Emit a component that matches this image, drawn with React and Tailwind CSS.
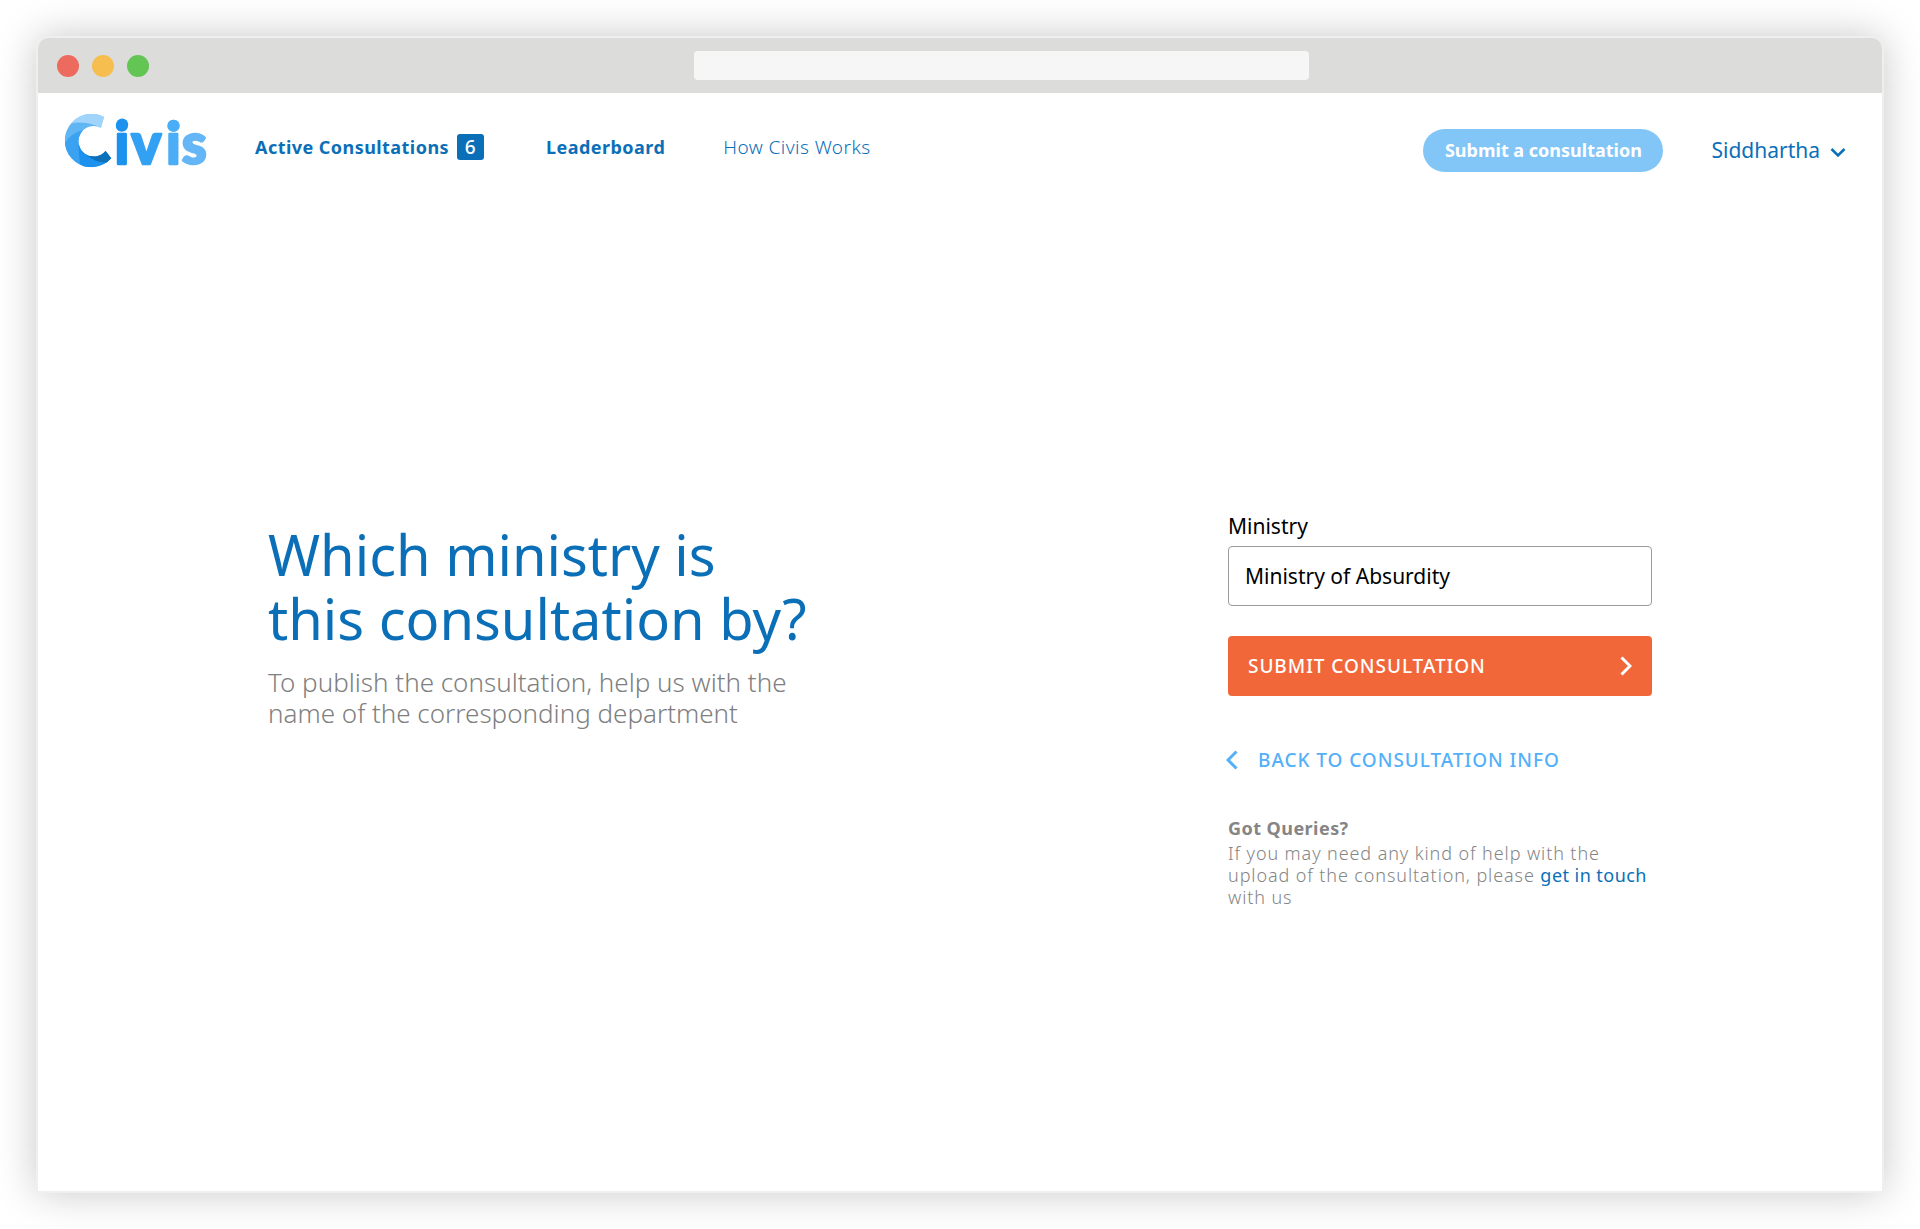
import React, { useState } from 'react';

const Logo = () => (
  <svg viewBox="133 280 430 165" className="h-[55px] w-[143px] overflow-visible" role="img" aria-label="Civis">
    <defs>
      <clipPath id="mark">
        <path d="M253 289 A80 80 0 1 0 275 413 L258 391 A46 46 0 1 1 244 321 Z" />
      </clipPath>
    </defs>
    <g clipPath="url(#mark)">
      <rect x="130" y="275" width="150" height="170" fill="#60b5f3" />
      <path d="M150 309 Q195 298 246 322 L262 275 L140 275 Z" fill="#a1d4fb" />
      <path d="M130 378 Q145 340 190 328 L200 445 L130 445 Z" fill="#3ba2f1" />
      <path d="M176 372 Q178 410 183 445 L290 445 L280 380 Z" fill="#1c92ee" />
      <path d="M200 403 Q236 412 258 389 L278 412 L268 426 Q230 428 200 403 Z" fill="#0d70b8" />
    </g>
    <g fontFamily="Lato, sans-serif" fontWeight="900" fontSize="170" strokeWidth="7" strokeLinejoin="round">
      <text x="285" y="431" fill="#1c92ee" stroke="#1c92ee">i</text>
      <text x="335" y="431" fill="#33a1f3" stroke="#33a1f3">v</text>
      <text x="440" y="431" fill="#4badf5" stroke="#4badf5">i</text>
      <text x="487" y="431" fill="#64b6f6" stroke="#64b6f6">s</text>
    </g>
    <circle cx="308" cy="311" r="18" fill="#1c92ee" />
    <circle cx="463" cy="315" r="18" fill="#4badf5" />
  </svg>
);

const TitleBar = () => (
  <div className="relative flex h-[55px] items-center bg-[#dcdcda] px-[19px]">
    <div className="flex gap-[13px]">
      <span className="size-[22px] rounded-full bg-[#ed6a5e]" />
      <span className="size-[22px] rounded-full bg-[#f6be4f]" />
      <span className="size-[22px] rounded-full bg-[#62c554]" />
    </div>
    <input
      aria-label="Address"
      className="absolute left-[35.6%] h-[29px] w-1/3 rounded bg-[#f6f6f6] px-3"
    />
  </div>
);

const Header = () => (
  <header className="flex items-start justify-between pr-9 pl-[26px] pt-[21px] text-[#0b6fb8]">
    <div className="flex items-start">
      <a href="#home">
        <Logo />
      </a>
      <nav className="ml-12 flex items-center pt-[18px] text-[18px] leading-[30px] tracking-wide">
        <a href="#consultations" className="flex items-center gap-2 font-bold">
          Active Consultations
          <span className="flex h-[26px] w-[27px] items-center justify-center rounded-[3px] bg-[#0b6fb8] text-[19px] font-medium text-white">
            6
          </span>
        </a>
        <a href="#leaderboard" className="ml-[62px] font-bold">Leaderboard</a>
        <a href="#how" className="ml-[58px] text-[19px] font-light">How Civis Works</a>
      </nav>
    </div>
    <div className="flex items-center gap-12 pt-[15px]">
      <button type="button" className="h-[43px] w-60 rounded-full bg-[#82c6f8] text-[18px] font-bold text-white">
        Submit a consultation
      </button>
      <button type="button" className="flex items-center gap-[10px] text-[21px]">
        Siddhartha
        <svg viewBox="0 0 16 11" className="mt-1 h-[11px] w-4" fill="none" stroke="currentColor" strokeWidth="2.5">
          <path d="M1.5 2 L8 8.5 L14.5 2" />
        </svg>
      </button>
    </div>
  </header>
);

const MinistryForm = () => {
  const [ministry, setMinistry] = useState('Ministry of Absurdity');

  return (
    <form className="w-[424px]" onSubmit={(e) => e.preventDefault()}>
      <label htmlFor="ministry" className="block text-[21px] leading-[30px] text-black">Ministry</label>
      <input
        id="ministry"
        value={ministry}
        onChange={(e) => setMinistry(e.target.value)}
        className="mt-[5px] h-[60px] w-full rounded border border-[#9a9a9a] px-4 text-[21px] text-black"
      />
      <button
        type="submit"
        className="mt-[30px] flex h-[60px] w-full items-center justify-between rounded bg-[#f2673a] px-5 text-[19px] font-medium tracking-wider text-white"
      >
        SUBMIT CONSULTATION
        <svg viewBox="0 0 12 20" className="h-5 w-3" fill="none" stroke="currentColor" strokeWidth="3">
          <path d="M1.5 1.5 L10 10 L1.5 18.5" />
        </svg>
      </button>
      <a href="#info" className="mt-[49px] flex items-center gap-5 text-[19px] leading-[30px] font-medium tracking-wider text-[#54b0f8]">
        <svg viewBox="0 0 12 20" className="-ml-0.5 h-5 w-3" fill="none" stroke="currentColor" strokeWidth="3">
          <path d="M10.5 1.5 L2 10 L10.5 18.5" />
        </svg>
        BACK TO CONSULTATION INFO
      </a>
      <div className="mt-[42px] text-[18px] leading-[22px] text-[#858585]">
        <h2 className="mb-[3px] font-bold tracking-wide">Got Queries?</h2>
        <p className="font-light tracking-wider">
          If you may need any kind of help with the
          <br />
          upload of the consultation, please{' '}
          <a href="#contact" className="font-normal tracking-wide text-[#0b6fb8]">get in touch</a>
          <br />
          with us
        </p>
      </div>
    </form>
  );
};

const App = () => (
  <div className="flex min-h-screen bg-white p-9 font-['Noto_Sans',sans-serif]">
    <div className="flex grow flex-col overflow-hidden rounded-t-xl border-2 border-[#efefef] bg-white shadow-[0_0_40px_rgba(0,0,0,0.22)]">
      <TitleBar />
      <Header />
      <main className="flex items-start justify-between px-[230px] pt-[339px]">
        <section className="pt-[11px]">
          <h1 className="text-[56px] leading-[64px] text-[#0b6fb8]">
            Which ministry is
            <br />
            this consultation by?
          </h1>
          <p className="mt-[17px] text-[26px] leading-[31px] font-light text-[#808080]">
            To publish the consultation, help us with the
            <br />
            name of the corresponding department
          </p>
        </section>
        <MinistryForm />
      </main>
    </div>
  </div>
);

export default App;
